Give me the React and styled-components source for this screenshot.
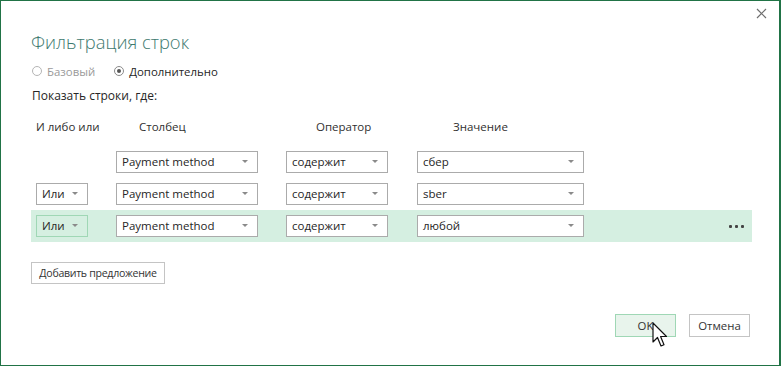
import styled, { createGlobalStyle } from "styled-components";

const Global = createGlobalStyle`
  html, body { margin: 0; padding: 0; background: #fff; }
  body { font-family: "Open Sans", "Noto Sans", Arial, sans-serif; color: #262626; }
  * { box-sizing: border-box; }
`;

const rows = [
  { logic: null, column: "Payment method", op: "содержит", value: "сбер" },
  { logic: "Или", column: "Payment method", op: "содержит", value: "sber" },
  { logic: "Или", column: "Payment method", op: "содержит", value: "любой", active: true },
];

export default function App() {
  return (
    <>
      <Global />
      <Dialog>
        <Close aria-label="close">
          <svg width="11" height="11" viewBox="0 0 11 11">
            <path d="M1 1 L10 10 M10 1 L1 10" stroke="#6f6f6f" strokeWidth="1.2" />
          </svg>
        </Close>

        <Title>Фильтрация строк</Title>

        <RadioRow>
          <Radio $disabled>
            <Dot />
            Базовый
          </Radio>
          <Radio>
            <Dot $checked />
            Дополнительно
          </Radio>
        </RadioRow>

        <Caption>Показать строки, где:</Caption>

        <HeadRow>
          <HeadCell $pad={0}>И либо или</HeadCell>
          <HeadCell $pad={23}>Столбец</HeadCell>
          <HeadCell $pad={30}>Оператор</HeadCell>
          <HeadCell $pad={36}>Значение</HeadCell>
        </HeadRow>

        {rows.map((r, i) => (
          <Row key={i} $active={r.active}>
            {r.logic ? (
              <Select $w={52} $active={r.active}>
                {r.logic}
                <Caret />
              </Select>
            ) : (
              <span />
            )}
            <Select $w={142}>
              {r.column}
              <Caret />
            </Select>
            <Select $w={102}>
              {r.op}
              <Caret />
            </Select>
            <Select $w={167}>
              {r.value}
              <Caret />
            </Select>
            {r.active ? (
              <More>
                <i />
                <i />
                <i />
              </More>
            ) : (
              <span />
            )}
          </Row>
        ))}

        <AddButton>Добавить предложение</AddButton>

        <Footer>
          <Button $primary>
            OK
            <Cursor width="20" height="28" viewBox="0 0 20 28">
              <path
                d="M1 1 L1 20 L5.5 15.5 L9 24 L12 22.7 L8.6 14.5 L14.5 14.5 Z"
                fill="#fff"
                stroke="#111"
                strokeWidth="1.2"
                strokeLinejoin="round"
              />
            </Cursor>
          </Button>
          <Button>Отмена</Button>
        </Footer>
      </Dialog>
    </>
  );
}

const Dialog = styled.div`
  position: relative;
  width: 781px;
  height: 366px;
  border: 1px solid #217346;
  border-right-width: 2px;
  padding: 27px 29px 0 29px;
  display: flex;
  flex-direction: column;
`;

const Close = styled.div`
  position: absolute;
  top: 7px;
  right: 12px;
  width: 11px;
  height: 11px;
  display: flex;
`;

const Title = styled.h1`
  margin: 0 0 0 1px;
  font-family: "Open Sans", "Noto Sans", sans-serif;
  font-weight: 300;
  font-size: 18.4px;
  line-height: 28px;
  color: #3e7a6f;
`;

const RadioRow = styled.div`
  display: flex;
  gap: 19px;
  margin-top: 5px;
  margin-left: 2px;
  height: 20px;
  align-items: center;
`;

const Radio = styled.label`
  display: flex;
  align-items: center;
  gap: 5px;
  font-size: 11.4px;
  color: ${(p) => (p.$disabled ? "#9a9a9a" : "#262626")};
`;

const Dot = styled.span`
  width: 10px;
  height: 10px;
  border-radius: 50%;
  border: 1px solid ${(p) => (p.$checked ? "#8a8a8a" : "#b5b5b5")};
  display: flex;
  align-items: center;
  justify-content: center;
  &::after {
    content: "";
    width: 4px;
    height: 4px;
    border-radius: 50%;
    background: ${(p) => (p.$checked ? "#555" : "transparent")};
  }
`;

const Caption = styled.div`
  margin-top: 5px;
  margin-left: 2px;
  font-size: 12px;
  line-height: 20px;
`;

const grid = `
  display: grid;
  grid-template-columns: 80px 170px 131px 167px 1fr;
  align-items: center;
  padding-left: 5px;
  width: 721px;
  margin-left: 1px;
`;

const HeadRow = styled.div`
  ${grid}
  height: 40px;
  padding-top: 1px;
  font-size: 11.5px;
`;

const HeadCell = styled.div`
  padding-left: ${(p) => p.$pad}px;
  color: #303030;
`;

const Row = styled.div`
  ${grid}
  height: 32px;
  background: ${(p) => (p.$active ? "#d5efe1" : "transparent")};
`;

const Select = styled.div`
  position: relative;
  width: ${(p) => p.$w}px;
  height: 22px;
  border: 1px solid ${(p) => (p.$active ? "#9fd7b5" : "#ababab")};
  background: ${(p) => (p.$active ? "#d5efe1" : "#fff")};
  font-size: 11.5px;
  line-height: 20px;
  padding-left: 5px;
  color: #262626;
  white-space: nowrap;
`;

const Caret = styled.span`
  position: absolute;
  right: 9px;
  top: 8px;
  width: 0;
  height: 0;
  border-left: 3px solid transparent;
  border-right: 3px solid transparent;
  border-top: 3px solid #8a8a8a;
`;

const More = styled.div`
  justify-self: end;
  margin-right: 8px;
  display: flex;
  gap: 3px;
  i {
    width: 3px;
    height: 3px;
    background: #444;
    border-radius: 1px;
  }
`;

const AddButton = styled.button`
  align-self: flex-start;
  margin-top: 20px;
  margin-left: 1px;
  height: 22px;
  width: 134px;
  border: 1px solid #c4c4c4;
  background: #fff;
  font-family: "Open Sans", "Noto Sans", sans-serif;
  font-size: 10.6px;
  letter-spacing: -0.3px;
  white-space: nowrap;
  color: #333;
  padding: 0;
`;

const Footer = styled.div`
  display: flex;
  justify-content: flex-end;
  gap: 13px;
  margin-top: 30px;
`;

const Button = styled.button`
  position: relative;
  width: 61px;
  height: 23px;
  border: 1px solid ${(p) => (p.$primary ? "#9fd7b5" : "#c4c4c4")};
  background: ${(p) => (p.$primary ? "#e8f4ec" : "#fff")};
  font-family: "Open Sans", "Noto Sans", sans-serif;
  font-size: 11.4px;
  color: #333;
  padding: 0;
`;

const Cursor = styled.svg`
  position: absolute;
  left: 36px;
  top: 7px;
`;
